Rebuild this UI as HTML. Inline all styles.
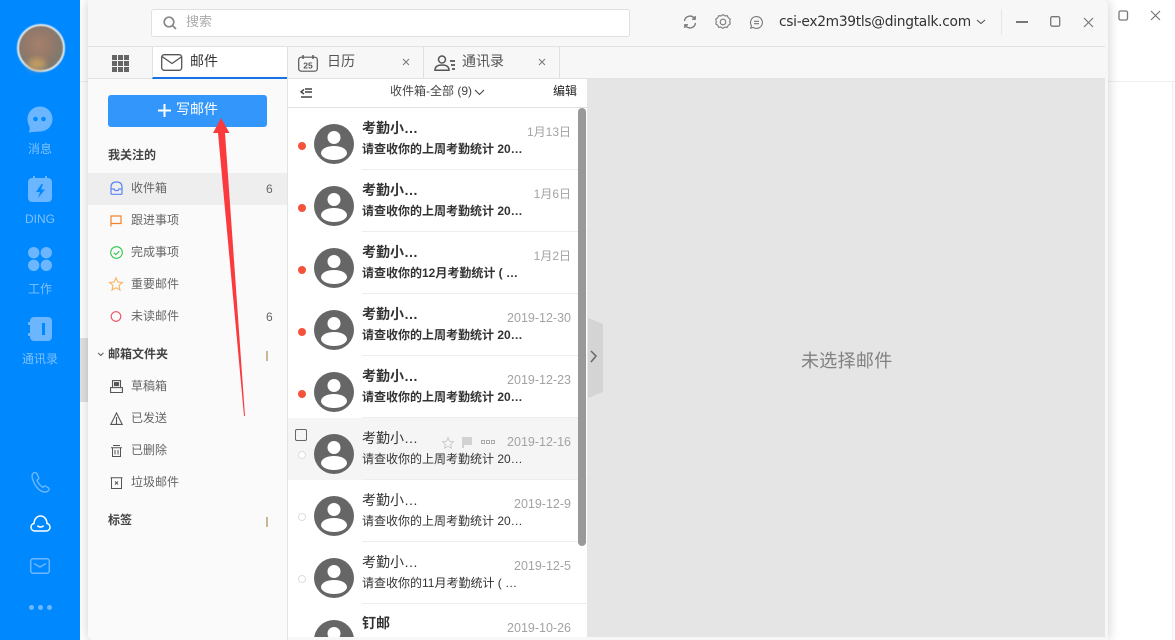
<!DOCTYPE html>
<html lang="zh"><head><meta charset="utf-8"><title>邮件</title>
<style>
*{box-sizing:border-box;margin:0;padding:0}
html,body{width:1175px;height:640px;overflow:hidden;background:#fff}
body{position:relative;font-family:"Liberation Sans","Noto Sans CJK SC",sans-serif;color:#333}
.a,.t{position:absolute}
.t{white-space:nowrap;line-height:18px}
svg{position:absolute;overflow:visible}
.side{font-size:12px;color:#7fc0ff;width:80px;left:0;text-align:center}
.nav{font-size:12px;color:#666;left:131px}
.hd{font-size:12px;color:#444;font-weight:700;left:108px}
.n{font-size:12px;color:#666;left:266px}
.nm{left:362px;font-size:14px;color:#333}
.sb{left:362px;font-size:12px;color:#333}
.b{font-weight:700}
.dt{right:604px;font-size:12.500px;color:#a3a3a3}
.dc{right:604px;font-size:12px;color:#a3a3a3}
.ln{left:362px;width:225px;height:1px;background:#eee}
.dot{left:298px;width:8px;height:8px;border-radius:50%;background:#f4523b}
.dot.o{background:#fff;border:1.500px solid #ddd}
</style></head><body>

<!-- back window -->
<div class="a" style="left:80px;top:81px;width:8px;height:1px;background:#eee"></div>
<div class="a" style="left:80px;top:338px;width:8px;height:64px;background:#e2e2e2"></div>
<div class="a" style="left:1108px;top:81px;width:67px;height:1px;background:#eee"></div>
<div class="a" style="left:1172px;top:81px;width:1px;height:559px;background:#eee"></div>
<svg style="left:1118px;top:10px" width="11" height="11"><rect x="1" y="1" width="8.500" height="9" rx="1.500" fill="none" stroke="#777" stroke-width="1.300"/></svg>
<svg style="left:1150px;top:10px" width="11" height="11"><path d="M1 1l9 9M10 1l-9 9" stroke="#777" stroke-width="1.200" fill="none"/></svg>

<!-- main window -->
<div class="a" style="left:88px;top:0;width:1020px;height:640px;background:#f7f7f7;border-radius:0 5px 0 6px;box-shadow:0 0 12px rgba(0,0,0,.2)"></div>

<!-- blue side -->
<div class="a" style="left:0;top:0;width:80px;height:640px;background:#0089ff"></div>
<div class="a" style="left:17px;top:24px;width:48px;height:48px;border-radius:50%;border:2px solid #dfe9ee;background:radial-gradient(circle at 45% 42%,#a5806c 0,#94796a 38%,#7c7a70 70%,#6f7a78 100%);filter:blur(.4px)"></div>
<div class="a" style="left:28px;top:58px;width:18px;height:12px;border-radius:50%;background:#c09a62;filter:blur(3px)"></div>

<svg style="left:27px;top:106px" width="26" height="27" viewBox="0 0 26 27"><path d="M13 .5C20 .5 25.500 6 25.500 13S20 25.500 13 25.500C10 25.500 6 26 1.500 26.500C3 24.500 2.800 22.500 2.500 20.500C1.200 18.500.5 16 .5 13C.5 6 6 .5 13 .5Z" fill="#6cb6ff"/><circle cx="8.500" cy="13" r="2.300" fill="#0089ff"/><circle cx="16.500" cy="13" r="2.300" fill="#0089ff"/></svg>
<div class="t side" style="top:139.500px">消息</div>
<svg style="left:28px;top:176px" width="24" height="26" viewBox="0 0 24 26"><rect x="0" y="2" width="24" height="24" rx="4" fill="#6cb6ff"/><rect x="5" y="0" width="2" height="5" fill="#6cb6ff"/><rect x="17" y="0" width="2" height="5" fill="#6cb6ff"/><path d="M13.500 8L8 16h4l-2 6 7-8.500h-4l2-5.500z" fill="#0089ff"/></svg>
<div class="t side" style="top:210px">DING</div>
<svg style="left:28px;top:247px" width="24" height="24" viewBox="0 0 24 24" fill="#6cb6ff"><circle cx="5.700" cy="5.700" r="5.700"/><circle cx="18.300" cy="5.700" r="5.700"/><circle cx="5.700" cy="18.300" r="5.700"/><circle cx="18.300" cy="18.300" r="5.700"/></svg>
<div class="t side" style="top:280px">工作</div>
<svg style="left:28px;top:317px" width="24" height="24" viewBox="0 0 24 24"><rect x="2" y="0" width="22" height="24" rx="4" fill="#6cb6ff"/><rect x="0" y="5" width="3" height="3" fill="#6cb6ff"/><rect x="0" y="16" width="3" height="3" fill="#6cb6ff"/><rect x="14" y="6" width="3" height="12" fill="#0089ff"/></svg>
<div class="t side" style="top:350px">通讯录</div>

<svg style="left:31px;top:472px" width="19" height="21" viewBox="0 0 19 21" fill="none" stroke="#6cb6ff" stroke-width="1.400"><path d="M2.500 1C1.200 2 .8 3.500 1.200 5.500C2 9 3.500 12.500 6 15.500C8.500 18.500 11.500 20 14 20C16 20 17.500 19 18 17.500C18.200 16.800 18 16.200 17.400 15.800L14.800 14.200C14.200 13.800 13.500 13.900 13 14.400L12 15.400C10 14.500 7.200 11.500 6 8.200L7.200 7.200C7.800 6.700 7.900 6 7.600 5.400L6 1.700C5.500.6 3.700.2 2.500 1Z"/></svg>
<svg style="left:30px;top:515px" width="21" height="17" viewBox="0 0 21 17" fill="none" stroke="#fff" stroke-width="1.500"><path d="M5 16C2.500 16 1 14.200 1 12.200C1 10.200 2.300 8.800 4 8.500C4.200 4.200 6.800 1 10.500 1S16.800 4.200 17 8.500C18.700 8.800 20 10.200 20 12.200C20 14.200 18.500 16 16 16Z"/><path d="M7.500 10.500C8.500 12.500 12.500 12.500 13.500 10.500"/></svg>
<svg style="left:30px;top:558px" width="20" height="16" viewBox="0 0 20 16" fill="none" stroke="#6cb6ff" stroke-width="1.500"><rect x=".7" y=".7" width="18.600" height="14.600" rx="2.500"/><path d="M4 5.500L10 9l6-3.500"/></svg>
<div class="a" style="left:29px;top:605px;width:5px;height:5px;border-radius:50%;background:#6cb6ff"></div>
<div class="a" style="left:38px;top:605px;width:5px;height:5px;border-radius:50%;background:#6cb6ff"></div>
<div class="a" style="left:47px;top:605px;width:5px;height:5px;border-radius:50%;background:#6cb6ff"></div>

<!-- top bar -->
<div class="a" style="left:151px;top:9px;width:479px;height:28px;background:#fff;border:1px solid #e0e0e0;border-radius:3px"></div>
<svg style="left:163px;top:16px" width="14" height="14" viewBox="0 0 14 14" fill="none" stroke="#888" stroke-width="1.700"><circle cx="6" cy="6" r="4.800"/><path d="M9.500 9.500L13 13"/></svg>
<div class="t" style="left:186px;top:13px;font-size:13px;color:#aaa">搜索</div>
<div class="a" style="left:88px;top:46px;width:1017px;height:1px;background:#e2e2e2"></div>

<svg style="left:683px;top:15px" width="14" height="14" viewBox="0 0 14 14" fill="none" stroke="#777" stroke-width="1.300"><path d="M1.500 6A5.500 5.500 0 0 1 11.500 3.500M12.500 8A5.500 5.500 0 0 1 2.500 10.500"/><path d="M12.200 1v3.200H9M1.800 13V9.800H5"/></svg>
<svg style="left:715px;top:14px" width="16" height="16" viewBox="0 0 16 16" fill="none" stroke="#777" stroke-width="1.100"><path d="M8 .6l2 1.300 2.300-.2 1 2.100 1.900 1.300-.5 2.400.5 2.400-1.900 1.300-1 2.100-2.300-.2-2 1.300-2-1.300-2.300.2-1-2.100L.8 10l.5-2.400L.8 5.100l1.900-1.300 1-2.100 2.300.2z"/><circle cx="8" cy="8" r="2.800"/></svg>
<svg style="left:750px;top:16px" width="13" height="13" viewBox="0 0 13 13" fill="none" stroke="#777" stroke-width="1.100"><path d="M6.500.6a5.900 5.900 0 1 1-3.300 10.800L.8 12.200l.6-2.600A5.900 5.900 0 0 1 6.500.6Z"/><path d="M4 5.300h5M4 7.700h5"/></svg>
<div class="t" style="left:779px;top:13px;color:#333;font-family:'DejaVu Sans','Liberation Sans',sans-serif;letter-spacing:-.3px;font-size:13.800px">csi-ex2m39tls@dingtalk.com</div>
<svg style="left:976px;top:19px" width="10" height="6" fill="none" stroke="#555" stroke-width="1.100"><path d="M1 1l4 3.500L9 1"/></svg>
<div class="a" style="left:1001px;top:9px;width:1px;height:26px;background:#e6e6e6"></div>
<div class="a" style="left:1016px;top:21px;width:12px;height:2px;background:#777"></div>
<svg style="left:1050px;top:16px" width="11" height="11"><rect x=".7" y=".7" width="9" height="9.500" rx="1.500" fill="none" stroke="#777" stroke-width="1.300"/></svg>
<svg style="left:1083px;top:17px" width="11" height="11"><path d="M1 1l9 9M10 1l-9 9" stroke="#777" stroke-width="1.200" fill="none"/></svg>

<!-- tabs -->
<div class="a" style="left:88px;top:78px;width:1017px;height:1px;background:#e2e2e2"></div>
<svg style="left:112px;top:55px" width="17" height="17" fill="#666"><rect x="0" y="0" width="5" height="5"/><rect x="6" y="0" width="5" height="5"/><rect x="12" y="0" width="5" height="5"/><rect x="0" y="6" width="5" height="5"/><rect x="6" y="6" width="5" height="5"/><rect x="12" y="6" width="5" height="5"/><rect x="0" y="12" width="5" height="5"/><rect x="6" y="12" width="5" height="5"/><rect x="12" y="12" width="5" height="5"/></svg>
<div class="a" style="left:152px;top:47px;width:135px;height:32px;background:#fff;border-left:1px solid #e2e2e2;border-bottom:2px solid #1573e6"></div>
<svg style="left:161px;top:54px" width="22" height="17" viewBox="0 0 22 17" fill="none" stroke="#555" stroke-width="1.300"><rect x=".7" y=".7" width="20" height="15.600" rx="2.500"/><path d="M1 2.500L11 9.500l10-7"/></svg>
<div class="t" style="left:190px;top:52px;font-size:14px;color:#333">邮件</div>
<div class="a" style="left:287px;top:47px;width:1px;height:31px;background:#e0e0e0"></div>
<div class="a" style="left:423px;top:47px;width:1px;height:31px;background:#e0e0e0"></div>
<div class="a" style="left:559px;top:47px;width:1px;height:31px;background:#e0e0e0"></div>
<svg style="left:298px;top:55px" width="20" height="17" viewBox="0 0 20 17" fill="none" stroke="#555" stroke-width="1.200"><rect x=".7" y="2.200" width="18.600" height="14" rx="2.500"/><path d="M5 0v4M15 0v4" stroke-width="1.400"/><text x="10" y="13.500" font-size="8.500" font-weight="700" text-anchor="middle" fill="#555" stroke="none" font-family="Liberation Sans">25</text></svg>
<div class="t" style="left:327px;top:52px;font-size:14px;color:#555">日历</div>
<svg style="left:402px;top:58px" width="8" height="8"><path d="M1 1l6 6M7 1l-6 6" stroke="#777" fill="none"/></svg>
<svg style="left:434px;top:55px" width="22" height="16" viewBox="0 0 22 16" fill="none" stroke="#555" stroke-width="1.500"><circle cx="8" cy="4.500" r="3.500"/><path d="M1 15.200C1 11.500 4 10 8 10s7 1.500 7 5.200Z"/><path d="M16 6h5M17 10h4M18 14h3" stroke-width="1.800"/></svg>
<div class="t" style="left:462px;top:52px;font-size:14px;color:#555">通讯录</div>
<svg style="left:538px;top:58px" width="8" height="8"><path d="M1 1l6 6M7 1l-6 6" stroke="#777" fill="none"/></svg>

<!-- left panel -->
<div class="a" style="left:88px;top:79px;width:199px;height:561px;background:#fafafa;border-radius:0 0 0 6px"></div>
<div class="a" style="left:287px;top:79px;width:1px;height:561px;background:#e4e4e4"></div>
<div class="a" style="left:108px;top:95px;width:159px;height:32px;background:#3296fa;border-radius:3px"></div>
<svg style="left:158px;top:104px" width="13" height="13"><path d="M6.500 0v13M0 6.500h13" stroke="#fff" stroke-width="2" fill="none"/></svg>
<div class="t" style="left:176px;top:100px;font-size:14px;color:#fff">写邮件</div>
<div class="t hd" style="top:146px">我关注的</div>
<div class="a" style="left:88px;top:173px;width:199px;height:32px;background:#eee"></div>

<svg style="left:110px;top:181px" width="13" height="14" viewBox="0 0 13 14" fill="none" stroke="#5b84f5" stroke-width="1.200"><path d="M1 6C1 2.800 3 1 6.500 1S12 2.800 12 6v6.500a.8.800 0 0 1-.8.8H1.800a.8.800 0 0 1-.8-.8Z"/><path d="M1 8h3l1 1.500h3L9 8h3"/></svg>
<div class="t nav" style="top:179px">收件箱</div><div class="t n" style="top:180px">6</div>
<svg style="left:110px;top:215px" width="12" height="12" viewBox="0 0 12 12" fill="none" stroke="#f5822a" stroke-width="1.200"><path d="M1 11.500V1h10v7.500H1"/></svg>
<div class="t nav" style="top:211px">跟进事项</div>
<svg style="left:110px;top:246px" width="13" height="13" viewBox="0 0 13 13" fill="none" stroke="#2fc44b" stroke-width="1.100"><circle cx="6.500" cy="6.500" r="5.800"/><path d="M3.800 6.800l2 1.800 3.500-3.500"/></svg>
<div class="t nav" style="top:243px">完成事项</div>
<svg style="left:109px;top:277px" width="14" height="14" viewBox="0 0 14 14" fill="none" stroke="#f9b25c" stroke-width="1.100"><path d="M7 .8l1.900 4.200 4.500.5-3.400 3 1 4.500L7 10.700 3 13l1-4.500-3.400-3 4.500-.5Z"/></svg>
<div class="t nav" style="top:275px">重要邮件</div>
<svg style="left:110px;top:310px" width="13" height="13"><circle cx="6" cy="6.500" r="4.800" fill="none" stroke="#ee4d67" stroke-width="1.100"/></svg>
<div class="t nav" style="top:307px">未读邮件</div><div class="t n" style="top:308px">6</div>

<svg style="left:97px;top:352px" width="8" height="5" fill="none" stroke="#555"><path d="M1 .8l2.800 2.700L6.500.8"/></svg>
<div class="t hd" style="top:345px">邮箱文件夹</div>
<div class="a" style="left:266px;top:351px;width:2px;height:10px;background:#c8b893"></div>
<svg style="left:110px;top:380px" width="13" height="13" viewBox="0 0 13 13" fill="none" stroke="#555" stroke-width="1.100"><rect x="2.500" y=".6" width="8" height="7"/><rect x="4.500" y="2.600" width="4" height="3" fill="#555"/><path d="M2.500 7.500H.6v5h11.800v-5h-1.900"/></svg>
<div class="t nav" style="top:377px">草稿箱</div>
<svg style="left:110px;top:412px" width="13" height="13" viewBox="0 0 13 13" fill="none" stroke="#555" stroke-width="1.100"><path d="M6.500 1L.8 12.400h11.400Z"/><path d="M6.500 5v7"/></svg>
<div class="t nav" style="top:409px">已发送</div>
<svg style="left:110px;top:445px" width="13" height="12" viewBox="0 0 13 12" fill="none" stroke="#555" stroke-width="1"><path d="M3 .5h7M1 2.800h11M2.500 2.800v8.700h8V2.800M5 5v4.500M8 5v4.500"/></svg>
<div class="t nav" style="top:441px">已删除</div>
<svg style="left:110px;top:477px" width="13" height="12" viewBox="0 0 13 12" fill="none" stroke="#555" stroke-width="1"><path d="M.5 .8h12M1.500 .8v10.700h10V.8M5 4.500l3 3M8 4.500l-3 3"/></svg>
<div class="t nav" style="top:473px">垃圾邮件</div>
<div class="t hd" style="top:511px">标签</div>
<div class="a" style="left:266px;top:517px;width:2px;height:10px;background:#c8b893"></div>

<!-- list -->
<div class="a" style="left:288px;top:79px;width:299px;height:558px;background:#fff"></div>
<div class="a" style="left:288px;top:107px;width:299px;height:1px;background:#e2e2e2"></div>
<svg style="left:300px;top:88px" width="13" height="11" viewBox="0 0 13 11" fill="none" stroke="#444" stroke-width="1.500"><path d="M4 1.500L1 3.800 4 6M5 1h7M5 4h7M1 9h11"/></svg>
<div class="t" style="left:390px;top:82px;font-size:12px;color:#444">收件箱-全部 (9)</div>
<svg style="left:474px;top:89px" width="11" height="7" fill="none" stroke="#444" stroke-width="1.100"><path d="M1 1l4.500 4.500L10 1"/></svg>
<div class="t" style="left:553px;top:82px;font-size:12px;color:#222">编辑</div>

<div class="a" style="left:288px;top:418px;width:290px;height:62px;background:#f5f5f5"></div>

<!-- rows -->
<svg style="left:314px;top:124px" width="40" height="40"><circle cx="20" cy="20" r="20" fill="#666"/><circle cx="20" cy="13.500" r="6.500" fill="#fff"/><ellipse cx="20" cy="29" rx="13" ry="7" fill="#fff"/></svg>
<div class="a dot" style="top:142px"></div>
<div class="t nm b" style="top:119px">考勤小…</div><div class="t sb b" style="top:140px">请查收你的上周考勤统计 20…</div><div class="t dc" style="top:123px">1月13日</div><div class="a ln" style="top:169px"></div>

<svg style="left:314px;top:186px" width="40" height="40"><circle cx="20" cy="20" r="20" fill="#666"/><circle cx="20" cy="13.500" r="6.500" fill="#fff"/><ellipse cx="20" cy="29" rx="13" ry="7" fill="#fff"/></svg>
<div class="a dot" style="top:204px"></div>
<div class="t nm b" style="top:181px">考勤小…</div><div class="t sb b" style="top:202px">请查收你的上周考勤统计 20…</div><div class="t dc" style="top:185px">1月6日</div><div class="a ln" style="top:231px"></div>

<svg style="left:314px;top:248px" width="40" height="40"><circle cx="20" cy="20" r="20" fill="#666"/><circle cx="20" cy="13.500" r="6.500" fill="#fff"/><ellipse cx="20" cy="29" rx="13" ry="7" fill="#fff"/></svg>
<div class="a dot" style="top:266px"></div>
<div class="t nm b" style="top:243px">考勤小…</div><div class="t sb b" style="top:264px">请查收你的12月考勤统计 ( …</div><div class="t dc" style="top:247px">1月2日</div><div class="a ln" style="top:293px"></div>

<svg style="left:314px;top:310px" width="40" height="40"><circle cx="20" cy="20" r="20" fill="#666"/><circle cx="20" cy="13.500" r="6.500" fill="#fff"/><ellipse cx="20" cy="29" rx="13" ry="7" fill="#fff"/></svg>
<div class="a dot" style="top:328px"></div>
<div class="t nm b" style="top:305px">考勤小…</div><div class="t sb b" style="top:326px">请查收你的上周考勤统计 20…</div><div class="t dt" style="top:309px">2019-12-30</div><div class="a ln" style="top:355px"></div>

<svg style="left:314px;top:372px" width="40" height="40"><circle cx="20" cy="20" r="20" fill="#666"/><circle cx="20" cy="13.500" r="6.500" fill="#fff"/><ellipse cx="20" cy="29" rx="13" ry="7" fill="#fff"/></svg>
<div class="a dot" style="top:390px"></div>
<div class="t nm b" style="top:367px">考勤小…</div><div class="t sb b" style="top:388px">请查收你的上周考勤统计 20…</div><div class="t dt" style="top:371px">2019-12-23</div><div class="a ln" style="top:417px"></div>

<svg style="left:314px;top:434px" width="40" height="40"><circle cx="20" cy="20" r="20" fill="#666"/><circle cx="20" cy="13.500" r="6.500" fill="#fff"/><ellipse cx="20" cy="29" rx="13" ry="7" fill="#fff"/></svg>
<div class="a" style="left:295px;top:429px;width:12px;height:12px;border:1px solid #666;border-radius:2px"></div>
<div class="a dot o" style="top:451px"></div>
<div class="t nm" style="top:429px">考勤小…</div><div class="t sb" style="top:450px">请查收你的上周考勤统计 20…</div><div class="t dt" style="top:433px">2019-12-16</div>
<svg style="left:442px;top:437px" width="12" height="12" viewBox="0 0 14 14" fill="none" stroke="#ccc" stroke-width="1.200"><path d="M7 .8l1.900 4.200 4.500.5-3.400 3 1 4.500L7 10.700 3 13l1-4.500-3.400-3 4.500-.5Z"/></svg>
<svg style="left:462px;top:437px" width="10" height="11"><path d="M0 0h10v8H2v3H0Z" fill="#d2d2d2"/></svg>
<svg style="left:481px;top:440px" width="15" height="5" fill="none" stroke="#aaa"><rect x=".5" y=".5" width="3" height="3"/><rect x="5.500" y=".5" width="3" height="3"/><rect x="10.500" y=".5" width="3" height="3"/></svg>
<div class="a ln" style="top:479px"></div>

<svg style="left:314px;top:496px" width="40" height="40"><circle cx="20" cy="20" r="20" fill="#666"/><circle cx="20" cy="13.500" r="6.500" fill="#fff"/><ellipse cx="20" cy="29" rx="13" ry="7" fill="#fff"/></svg>
<div class="a dot o" style="top:513px"></div>
<div class="t nm" style="top:491px">考勤小…</div><div class="t sb" style="top:512px">请查收你的上周考勤统计 20…</div><div class="t dt" style="top:495px">2019-12-9</div><div class="a ln" style="top:541px"></div>

<svg style="left:314px;top:558px" width="40" height="40"><circle cx="20" cy="20" r="20" fill="#666"/><circle cx="20" cy="13.500" r="6.500" fill="#fff"/><ellipse cx="20" cy="29" rx="13" ry="7" fill="#fff"/></svg>
<div class="a dot o" style="top:575px"></div>
<div class="t nm" style="top:553px">考勤小…</div><div class="t sb" style="top:574px">请查收你的11月考勤统计 ( …</div><div class="t dt" style="top:557px">2019-12-5</div><div class="a ln" style="top:603px"></div>

<div class="a" style="left:314px;top:620px;width:40px;height:17px;overflow:hidden"><svg style="left:0;top:0" width="40" height="40"><circle cx="20" cy="20" r="20" fill="#666"/><circle cx="20" cy="13.500" r="6.500" fill="#fff"/></svg></div>
<div class="t nm b" style="top:614px">钉邮</div><div class="t dt" style="top:619px">2019-10-26</div>

<div class="a" style="left:578px;top:108px;width:8px;height:438px;background:#999;border-radius:4px"></div>

<!-- right -->
<div class="a" style="left:587px;top:79px;width:518px;height:558px;background:#e5e5e5"></div>
<svg style="left:588px;top:318px" width="15" height="80"><path d="M0 0L15 6V74L0 80Z" fill="#d4d4d4"/><path d="M3 34l5 5-5 6" fill="none" stroke="#666" stroke-width="1.500" transform="translate(0 -1)"/></svg>
<div class="t" style="left:801px;top:350px;font-size:18px;line-height:22px;color:#808080;letter-spacing:.3px">未选择邮件</div>

<!-- arrow -->
<svg style="left:0;top:0" width="1175" height="640"><path d="M221 118L229.500 133H225L245 416L244 416L218 133H213Z" fill="#fb3a3e"/></svg>
</body></html>
